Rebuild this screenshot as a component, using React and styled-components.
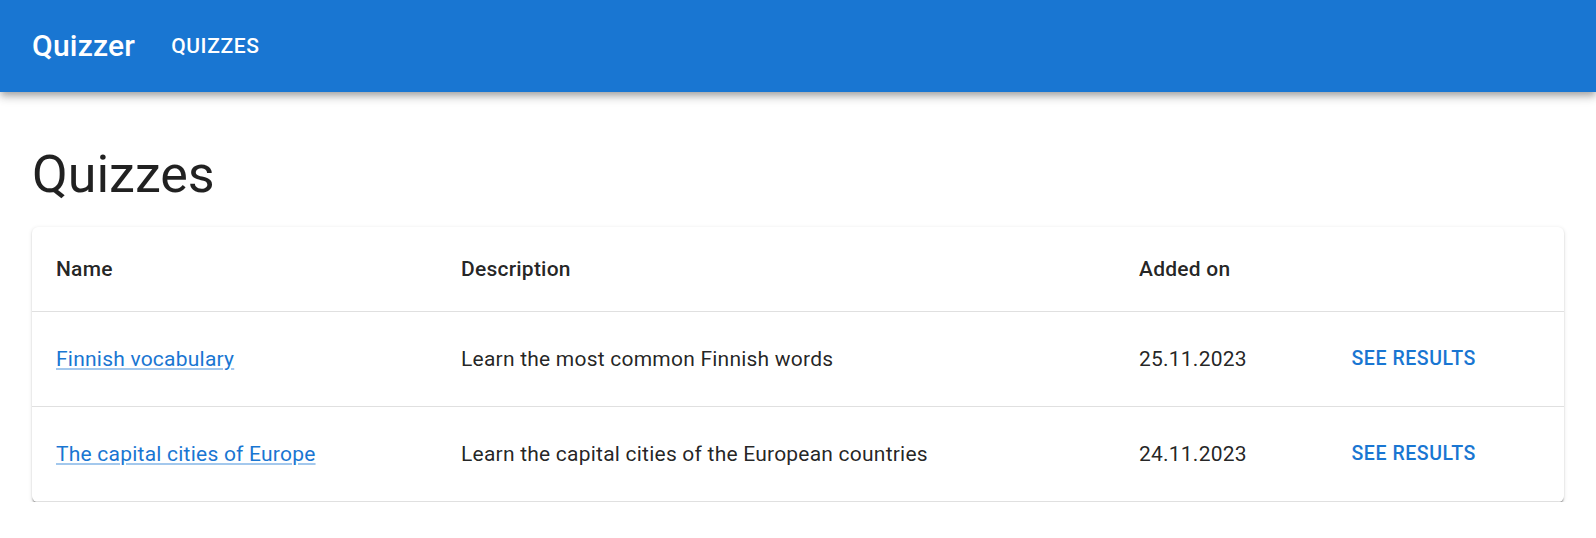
import React from "react";
import styled, { createGlobalStyle } from "styled-components";

const GlobalStyle = createGlobalStyle`
  html, body {
    margin: 0;
    padding: 0;
    background: #ffffff;
    font-family: Roboto, "Helvetica Neue", Arial, sans-serif;
    color: rgba(0, 0, 0, 0.87);
    -webkit-font-smoothing: antialiased;
  }
  * { box-sizing: border-box; }
`;

const AppBar = styled.header`
  position: relative;
  z-index: 2;
  height: 92px;
  display: flex;
  align-items: center;
  padding: 0 36px 0 32px;
  background: #1976d2;
  color: #ffffff;
  box-shadow: 0 3px 6px -1.5px rgba(0, 0, 0, 0.2),
    0 6px 7.5px 0 rgba(0, 0, 0, 0.14), 0 1.5px 15px 0 rgba(0, 0, 0, 0.12);
`;

const Logo = styled.div`
  font-size: 30px;
  font-weight: 500;
  line-height: 1.6;
  letter-spacing: 0.0075em;
  margin-right: 24px;
`;

const NavButton = styled.button`
  border: 0;
  background: transparent;
  color: inherit;
  font-family: inherit;
  font-size: 21px;
  font-weight: 500;
  line-height: 1.75;
  letter-spacing: 0.02857em;
  text-transform: uppercase;
  padding: 9px 12px;
  border-radius: 6px;
  cursor: pointer;
`;

const Main = styled.main`
  padding: 0 32px;
`;

const Title = styled.h1`
  margin: 51px 0 20px;
  font-size: 52px;
  font-weight: 400;
  line-height: 64px;
  letter-spacing: 0;
  color: rgba(0, 0, 0, 0.87);
`;

const Card = styled.div`
  background: #ffffff;
  border-radius: 6px;
  overflow: hidden;
  box-shadow: 0 3px 1.5px -1.5px rgba(0, 0, 0, 0.2),
    0 1.5px 1.5px 0 rgba(0, 0, 0, 0.14), 0 1.5px 4.5px 0 rgba(0, 0, 0, 0.12);
`;

const Table = styled.table`
  width: 100%;
  border-collapse: collapse;
  table-layout: fixed;
`;

const Col = styled.col`
  width: ${(p) => (p.$w ? `${p.$w}px` : "auto")};
`;

const HeadCell = styled.th`
  text-align: left;
  padding: 24px;
  font-size: 21px;
  font-weight: 500;
  line-height: 36px;
  letter-spacing: 0.01071em;
  color: rgba(0, 0, 0, 0.87);
  border-bottom: 1px solid rgb(224, 224, 224);
`;

const Cell = styled.td`
  text-align: left;
  padding: 24px;
  font-size: 21px;
  font-weight: 400;
  line-height: 30px;
  letter-spacing: 0.01071em;
  color: rgba(0, 0, 0, 0.87);
  border-bottom: 1px solid rgb(224, 224, 224);
  vertical-align: middle;
`;

const QuizLink = styled.a`
  color: #1976d2;
  text-decoration: underline;
  text-decoration-color: rgba(25, 118, 210, 0.4);
  cursor: pointer;
`;

const TextButton = styled.button`
  display: inline-flex;
  align-items: center;
  border: 0;
  background: transparent;
  color: #1976d2;
  font-family: inherit;
  font-size: 19.5px;
  font-weight: 500;
  line-height: 1.75;
  letter-spacing: 0.02857em;
  text-transform: uppercase;
  padding: 6px 7.5px;
  border-radius: 6px;
  cursor: pointer;
`;

const quizzes = [
  {
    id: 1,
    name: "Finnish vocabulary",
    description: "Learn the most common Finnish words",
    added: "25.11.2023",
  },
  {
    id: 2,
    name: "The capital cities of Europe",
    description: "Learn the capital cities of the European countries",
    added: "24.11.2023",
  },
];

export default function App() {
  return (
    <>
      <GlobalStyle />
      <AppBar>
        <Logo>Quizzer</Logo>
        <NavButton>Quizzes</NavButton>
      </AppBar>
      <Main>
        <Title>Quizzes</Title>
        <Card>
          <Table>
            <colgroup>
              <Col $w={405} />
              <Col $w={678} />
              <Col $w={205} />
              <Col />
            </colgroup>
            <thead>
              <tr>
                <HeadCell>Name</HeadCell>
                <HeadCell>Description</HeadCell>
                <HeadCell>Added on</HeadCell>
                <HeadCell />
              </tr>
            </thead>
            <tbody>
              {quizzes.map((q) => (
                <tr key={q.id}>
                  <Cell>
                    <QuizLink href="#">{q.name}</QuizLink>
                  </Cell>
                  <Cell>{q.description}</Cell>
                  <Cell>{q.added}</Cell>
                  <Cell>
                    <TextButton>See results</TextButton>
                  </Cell>
                </tr>
              ))}
            </tbody>
          </Table>
        </Card>
      </Main>
    </>
  );
}
